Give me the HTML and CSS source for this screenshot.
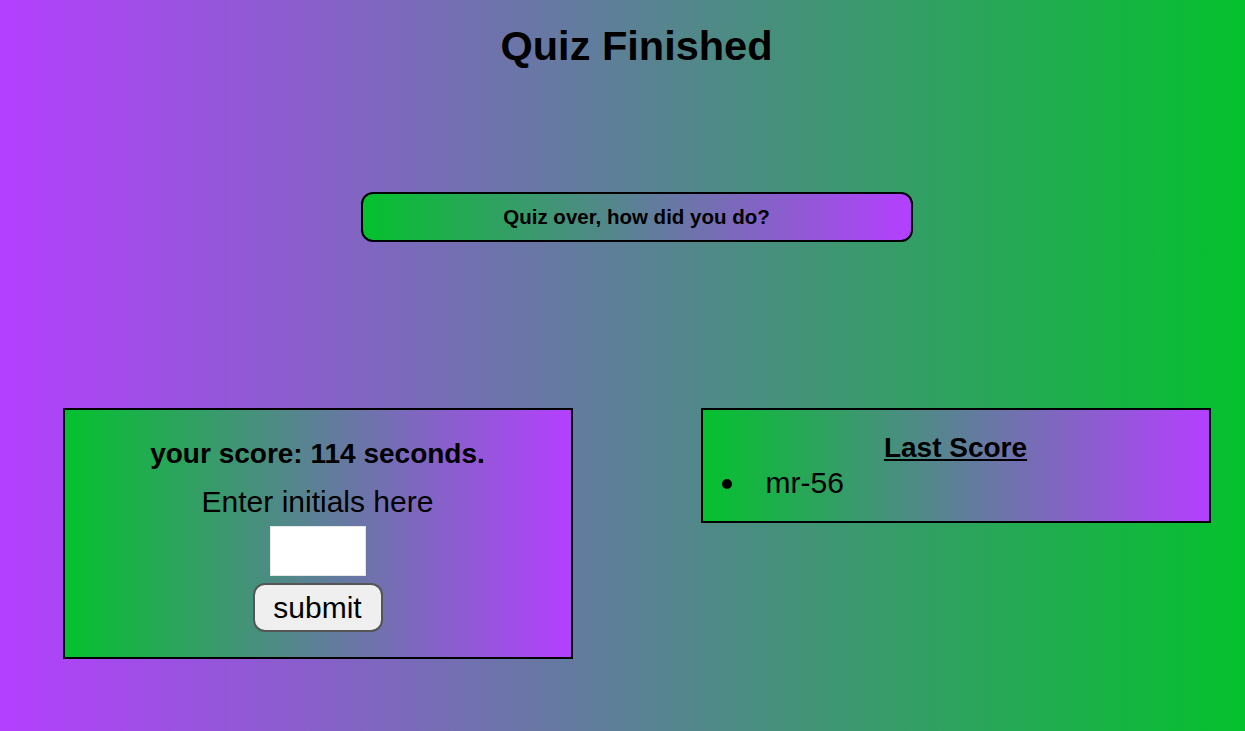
FILE: index.html
```html
<!DOCTYPE html>
<html lang="en">
<head>
<meta charset="utf-8">
<title>Quiz Finished</title>
<link rel="stylesheet" href="styles.css">
</head>
<body>
<main class="page">
  <h1 class="title">Quiz Finished</h1>
  <div class="banner">Quiz over, how did you do?</div>
  <section class="row">
    <div class="card card-score">
      <p class="score">your score: 114 seconds.</p>
      <label class="label" for="initials">Enter initials here</label>
      <input class="initials" id="initials" type="text">
      <button class="submit" type="button">submit</button>
    </div>
    <div class="card card-last">
      <h2 class="last-title">Last Score</h2>
      <ul class="last-list">
        <li class="last-item">mr-56</li>
      </ul>
    </div>
  </section>
</main>
</body>
</html>
```

FILE: styles.css
```css
html, body {
  margin: 0;
  padding: 0;
}
body {
  min-height: 731px;
  background: linear-gradient(to right, #b43fff, #04c12d);
  font-family: "Liberation Sans", Arial, sans-serif;
  color: #000;
}
.page {
  padding-left: 28px;
  display: flex;
  flex-direction: column;
  align-items: center;
}
.title {
  margin: 22px 0 0;
  font-size: 41.5px;
  line-height: 48px;
  font-weight: bold;
}
.banner {
  margin-top: 122px;
  width: 552px;
  height: 50px;
  box-sizing: border-box;
  border: 2px solid #000;
  border-radius: 12px;
  background: linear-gradient(to right, #04c12d, #b43fff);
  display: flex;
  align-items: center;
  justify-content: center;
  font-size: 20.5px;
  font-weight: bold;
}
.row {
  margin-top: 166px;
  display: flex;
  gap: 128px;
  justify-content: center;
  align-items: flex-start;
}
.card {
  width: 510px;
  box-sizing: border-box;
  border: 2px solid #000;
  background: linear-gradient(to right, #04c12d, #b43fff);
}
.card-score {
  height: 251px;
  padding-top: 27px;
  display: flex;
  flex-direction: column;
  align-items: center;
}
.score {
  margin: 0;
  font-size: 28px;
  line-height: 34px;
  font-weight: bold;
}
.label {
  margin-top: 13px;
  font-size: 30px;
  line-height: 36px;
}
.initials {
  margin-top: 6px;
  width: 96px;
  height: 50px;
  box-sizing: border-box;
  border: 1px solid #e8e8e8;
  background: #fff;
  padding: 0;
}
.submit {
  margin-top: 7px;
  width: 130px;
  height: 49px;
  box-sizing: border-box;
  border: 2px solid #555;
  border-radius: 12px;
  background: #efefef;
  font-family: "Liberation Sans", Arial, sans-serif;
  font-size: 30px;
  color: #000;
  padding: 0;
}
.card-last {
  height: 115px;
  padding-top: 21px;
}
.last-title {
  margin: 0;
  text-align: center;
  font-size: 28px;
  line-height: 34px;
  font-weight: bold;
  text-decoration: underline;
}
.last-list {
  margin: 0;
  padding-left: 19px;
  list-style: none;
  font-size: 30px;
  line-height: 36px;
}
.last-item {
  display: flex;
  align-items: center;
}
.last-item::before {
  content: "";
  width: 10px;
  height: 10px;
  border-radius: 50%;
  background: #000;
  margin-right: 34px;
  margin-top: 2px;
}
```
